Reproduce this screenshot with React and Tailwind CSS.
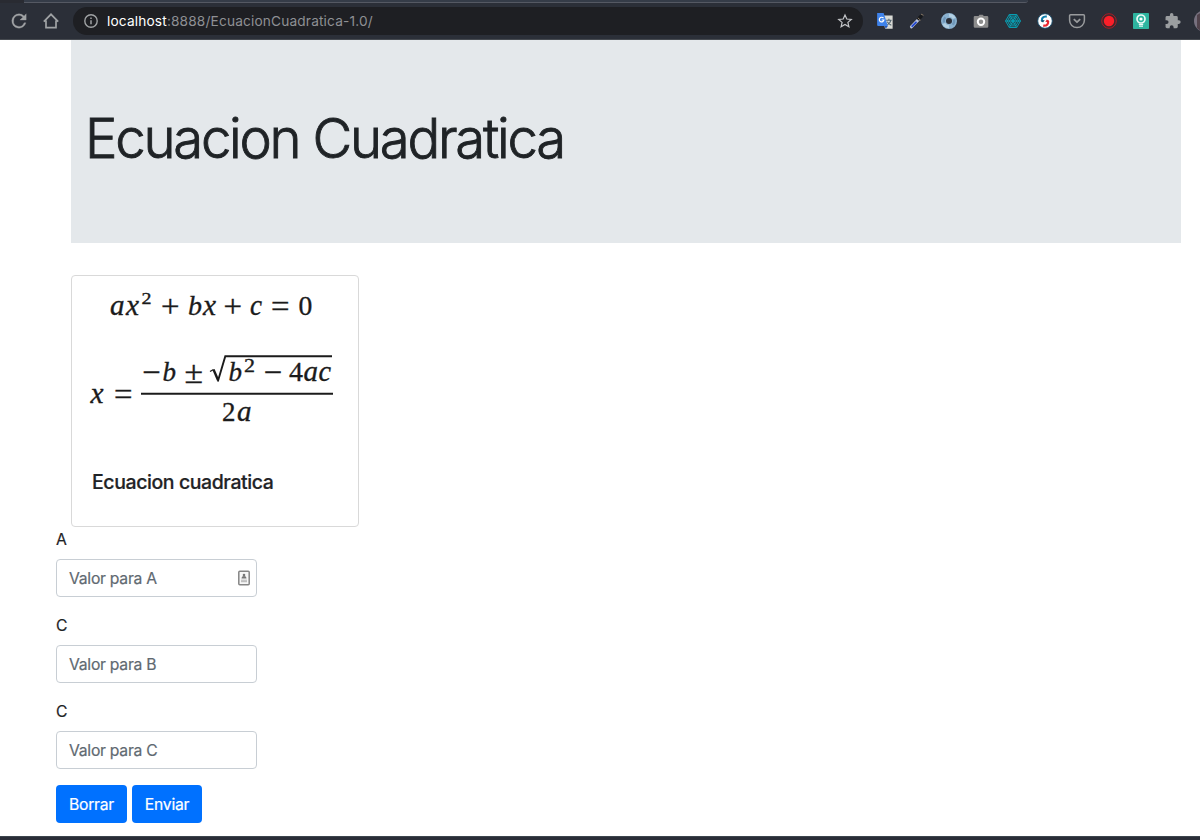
import React from "react";

const Reload = () => (
  <svg width="18" height="18" viewBox="2 2 20 20" fill="#a0a3a5" className="shrink-0">
    <path d="M17.65 6.35A7.96 7.96 0 0 0 12 4a8 8 0 1 0 7.730 10h-2.080A6 6 0 1 1 12 6c1.660 0 3.140.690 4.220 1.780L13 11h7V4z" stroke="#a0a3a5" strokeWidth=".3" />
  </svg>
);

const House = () => (
  <svg width="18" height="18" viewBox="0 0 18 18" fill="none" stroke="#a0a3a5" strokeWidth="1.7">
    <path d="M1.8 9.6 9 2.3l7.2 7.3M4 8.5v7.2h10V8.5" />
  </svg>
);

const Info = () => (
  <svg width="16" height="16" viewBox="0 0 16 16" fill="none" stroke="#a0a3a5" strokeWidth="1.4">
    <circle cx="8" cy="8" r="6.2" />
    <path d="M8 7.2v4M8 4.5v1.5" strokeWidth="1.5" />
  </svg>
);

const Star = () => (
  <svg width="16" height="16" viewBox="0 0 16 16" fill="none" stroke="#c4c6c9" strokeWidth="1.2">
    <path d="m8 1.9 1.8 4.1 4.5.4-3.4 3 1 4.4L8 11.5l-3.9 2.3 1-4.4-3.4-3 4.5-.4z" />
  </svg>
);

const extensions = [
  {
    name: "translate",
    art: (
      <g transform="translate(-.9 0)">
        <path d="M6 2.5h10.5v13.3H9z" fill="#d9dbd6" />
        <path d="M10 7.2h5.5M12.8 5.8v1.4M14.8 7.4c-.5 2.2-2 3.6-3.8 4.7M11.2 8.8c1 1.7 2.4 2.8 4 3.5" stroke="#53656f" strokeWidth="1.1" fill="none" />
        <path d="M1 0h6.5l4.3 13H2a1 1 0 0 1-1-1z" fill="#3e82ea" />
        <path d="M8.5 13h3.3L9.6 15.8z" fill="#2456b5" />
        <path d="M7.4 5.2A2.3 2.3 0 1 0 7.8 7H5.6" stroke="#fff" strokeWidth="1.2" fill="none" />
      </g>
    ),
  },
  {
    name: "picker",
    art: (
      <>
        <path d="M2.500 13.8 9.500 6.500" stroke="#b9c5e0" strokeWidth="3.100" strokeLinecap="round" />
        <path d="M3.2 13.2 7 9.300" stroke="#2448d0" strokeWidth="1.8" strokeLinecap="round" />
        <path d="M9.8 5.6 12 3.4" stroke="#17191c" strokeWidth="3.6" strokeLinecap="round" />
        <path d="m12 1.100 2.500 1.200M8.800 4.800l2.800 2.500" stroke="#857663" strokeWidth="1" />
      </>
    ),
  },
  {
    name: "ring",
    art: (
      <>
        <circle cx="8" cy="8" r="5.5" stroke="#8bb2d0" strokeWidth="5" fill="none" />
        <path d="M8 2.2a5.8 5.8 0 0 1 5.2 3.2M8 13.8a5.8 5.8 0 0 1-5.2-3.2" stroke="#b3d0e3" strokeWidth="3" fill="none" />
        <path d="M13 6.5a5.3 5.3 0 0 1-1.4 5.2M3 9.5a5.3 5.3 0 0 1 1.4-5.2" stroke="#6f97b9" strokeWidth="2.2" fill="none" />
      </>
    ),
  },
  {
    name: "camera",
    art: (
      <>
        <path d="M5.5 3 6.5 1.7h3.2L10.8 3H14a1.3 1.3 0 0 1 1.3 1.3v9.2a1.3 1.3 0 0 1-1.3 1.3H2A1.3 1.3 0 0 1 .7 13.500V4.300A1.300 1.300 0 0 1 2 3z" fill="#8d8d8d" />
        <circle cx="8" cy="8.8" r="3.2" fill="#8d8d8d" stroke="#fff" strokeWidth="2" />
      </>
    ),
  },
  {
    name: "web",
    art: (
      <g stroke="#06a3b7" strokeWidth=".95" fill="none">
        <path d="M4.300 1.500h7.400L15.500 8l-3.800 6.500H4.300L.5 8z" />
        <path d="M5.200 3.100h5.600L13.600 8l-2.800 4.900H5.200L2.400 8z" />
        <path d="M6.200 4.900h3.600L11.600 8l-1.800 3.100H6.200L4.400 8z" />
        <path d="M.5 8h15M4.300 1.500l7.400 13M11.700 1.500l-7.400 13" />
        <circle cx="8" cy="8" r="1.300" />
      </g>
    ),
  },
  {
    name: "sync",
    art: (
      <>
        <circle cx="8" cy="8" r="7.300" fill="#fff" stroke="#124b6c" strokeWidth=".9" />
        <path d="M9.800 3.600C6 3 4 5.500 5.300 8.200" stroke="#1280ad" strokeWidth="2.200" fill="none" />
        <path d="m3.300 7.700 4.400-.6-1.600 2.500z" fill="#124b6c" />
        <path d="M6.200 12.600c3.800.6 5.800-2 4.500-4.800" stroke="#eb2831" strokeWidth="2.200" fill="none" />
        <path d="m12.700 8.400-4.400.6 1.600-2.500z" fill="#d51e2b" />
      </>
    ),
  },
  {
    name: "pocket",
    art: (
      <g stroke="#999b9d" strokeWidth="1.500" fill="none" strokeLinejoin="round">
        <path d="M1.600 1.800h12.800a1 1 0 0 1 1 1v4.400a7.400 7.400 0 0 1-14.800 0V2.800a1 1 0 0 1 1-1z" />
        <path d="M4.800 6.200 8 9.200l3.200-3" strokeWidth="1.800" />
      </g>
    ),
  },
  {
    name: "record",
    art: (
      <>
        <circle cx="8" cy="8" r="7.300" fill="#42272c" stroke="#a71e27" strokeWidth="1" />
        <circle cx="8" cy="8" r="5.200" fill="#fb1f29" />
      </>
    ),
  },
  {
    name: "bulb",
    art: (
      <>
        <rect width="16" height="16" rx=".7" fill="#2eb5a0" />
        <circle cx="8" cy="6" r="4" stroke="#e9faf6" strokeWidth="1.700" fill="none" />
        <circle cx="8" cy="6" r="1.600" fill="#fff" />
        <path d="M5.800 11.300h4.400M6 13.200h4" stroke="#e9faf6" strokeWidth="1.300" />
      </>
    ),
  },
  {
    name: "puzzle",
    art: (
      <path transform="translate(-.9 -.6) scale(.72)" fill="#9b9ea0" d="M20.500 11H19V7a2 2 0 0 0-2-2h-4V3.500a2.500 2.500 0 0 0-5 0V5H4a2 2 0 0 0-2 2v3.800h1.500a2.700 2.700 0 0 1 0 5.400H2V20a2 2 0 0 0 2 2h3.800v-1.500a2.700 2.700 0 0 1 5.400 0V22H17a2 2 0 0 0 2-2v-4h1.500a2.500 2.500 0 0 0 0-5z" />
    ),
  },
];

const Browser = () => (
  <header className="h-10 w-full shrink-0 overflow-hidden border-b border-[#464a50] bg-[#2b2f38]">
    <div className="flex h-[3px] w-full">
      <div className="w-6 bg-[#292b32]" />
      <div className="w-[1004px] rounded-br border-b border-[#555963] bg-[#353c48]" />
      <div className="flex-1 bg-[#2b2f38]" />
    </div>
    <div className="flex h-9 items-center pl-[10px]">
      <Reload />
      <div className="ml-[14px] shrink-0"><House /></div>
      <div className="ml-[13px] flex h-7 w-[790px] shrink-0 items-center rounded-full bg-[#1e1f23] pl-[10px] pr-[10px]">
        <Info />
        <p className="ml-2 flex-1 whitespace-nowrap font-['Inter',sans-serif] text-[13.700px] tracking-[0.155px] text-[#8e9094]">
          <span className="text-white">localhost</span>:8888/EcuacionCuadratica-1.0/
        </p>
        <Star />
      </div>
      <div className="ml-[14px] flex shrink-0 gap-4">
        {extensions.map((e) => (
          <svg key={e.name} width="16" height="16" viewBox="0 0 16 16" className="shrink-0 overflow-visible">{e.art}</svg>
        ))}
      </div>
      <svg width="22" height="22" viewBox="0 0 22 22" className="ml-[13px] shrink-0">
        <circle cx="11" cy="11" r="11" fill="#77717f" />
        <path d="M3 5 8 2v20l-5-4z" fill="#51434c" />
      </svg>
    </div>
  </header>
);

/* [character, x, baseline, width, size, italic] */
const glyphs = [
  ["a", 38, 39, 14.500, 29, true],
  ["x", 54, 39, 13, 29, true],
  ["2", 69.500, 28, 10, 17, false],
  ["+", 89, 41, 18.500, 32, false],
  ["b", 116, 39, 14, 28, true],
  ["x", 131, 39, 13, 29, true],
  ["+", 151.500, 41, 18.500, 32, false],
  ["c", 178, 39, 12, 29, true],
  ["=", 199, 41, 18.500, 32, false],
  ["0", 226.500, 39, 13.800, 28, false],
  ["−", 70, 107, 18.500, 32, false],
  ["b", 90.500, 105, 13.500, 28, true],
  ["±", 112.500, 107, 18.500, 32, false],
  ["b", 156.500, 105, 13.500, 28, true],
  ["2", 172, 96, 11, 18, false],
  ["−", 191.500, 107, 18.500, 32, false],
  ["4", 217, 105, 14, 28, false],
  ["a", 231.500, 105, 14.500, 29, true],
  ["c", 246.500, 105, 12.500, 29, true],
  ["x", 18.500, 127, 13, 29, true],
  ["=", 42, 129, 18.500, 32, false],
  ["2", 150, 145, 13.500, 28, false],
  ["a", 165, 145, 14.500, 29, true],
];

const Formula = () => (
  <svg width="286" height="174" viewBox="0 0 286 174" className="block">
    <g fill="#1b1b1b" stroke="#1b1b1b" strokeWidth=".35" fontFamily="'Liberation Serif', serif">
      {glyphs.map(([ch, x, y, w, size, it], i) => (
        <text key={i} x={x} y={y} fontSize={size} textLength={w} lengthAdjust="spacingAndGlyphs" fontStyle={it ? "italic" : "normal"}>{ch}</text>
      ))}
    </g>
    <g fill="none" stroke="#1b1b1b">
      <path d="M138 95.500l3.500-2" strokeWidth="1.300" />
      <path d="m141.500 93.500 4.500 10.500" strokeWidth="2.400" />
      <path d="M145.800 105.500 153.300 80.300H260" strokeWidth="1.900" />
      <path d="M69 117.700h192" strokeWidth="2.100" />
    </g>
  </svg>
);

const Field = ({ label, hint, contact }) => (
  <div className="mb-4">
    <label className="mb-2 block h-6 pt-px text-[15.700px] leading-6 [-webkit-text-stroke:0.2px]">{label}</label>
    <div className="flex h-[38px] w-[201px] items-center justify-between rounded border border-[#c8ced4] bg-white pl-3 pr-[6px] text-[15.700px] tracking-[-0.250px] text-[#5f6971]">
      <span className="pt-[2px] [-webkit-text-stroke:0.2px]">{hint}</span>
      {contact && (
        <svg width="12" height="16" viewBox="0 0 12 16">
          <rect x=".8" y="1.200" width="10.400" height="13.600" rx="1" fill="#f7f7f7" stroke="#858585" strokeWidth="1.500" />
          <circle cx="6" cy="5" r="1.300" fill="#777" />
          <path d="M3.500 8.500c0-3.300 5-3.300 5 0z" fill="#777" />
          <path d="M3 10.200h6M3 11.700h6" stroke="#aaa" strokeWidth=".9" />
        </svg>
      )}
    </div>
  </div>
);

const Button = ({ children, width }) => (
  <button type="button" className={"h-[38px] rounded bg-[#0071ff] pt-[2px] text-[15.700px] tracking-[-0.250px] text-white [-webkit-text-stroke:0.2px] " + width}>{children}</button>
);

export default function App() {
  return (
    <div className="flex h-[840px] w-[1200px] flex-col overflow-hidden bg-white font-['Inter',sans-serif] text-[#1f2326]">
      <Browser />
      <main className="flex-1 pl-14">
        <section className="ml-[15px] h-[203px] w-[1110px] bg-[#e4e8eb] pl-[14px] pt-[65px]">
          <h1 className="whitespace-nowrap text-[54.500px] font-light leading-[67px] tracking-[-2.260px] [-webkit-text-stroke:0.9px]">Ecuacion Cuadratica</h1>
        </section>
        <article className="ml-[15px] mt-8 h-[252px] w-72 rounded border border-[#d9d9d9]">
          <Formula />
          <h5 className="px-5 pt-5 text-[19.500px] font-medium leading-6 tracking-[-0.420px] [-webkit-text-stroke:0.2px]">Ecuacion cuadratica</h5>
        </article>
        <form>
          <Field label="A" hint="Valor para A" contact />
          <Field label="C" hint="Valor para B" />
          <Field label="C" hint="Valor para C" />
          <div className="flex gap-[5px]">
            <Button width="w-[71px]">Borrar</Button>
            <Button width="w-[70px]">Enviar</Button>
          </div>
        </form>
      </main>
      <footer className="h-1 shrink-0 border-t border-[#3d454d] bg-[#2a2d37]" />
    </div>
  );
}
